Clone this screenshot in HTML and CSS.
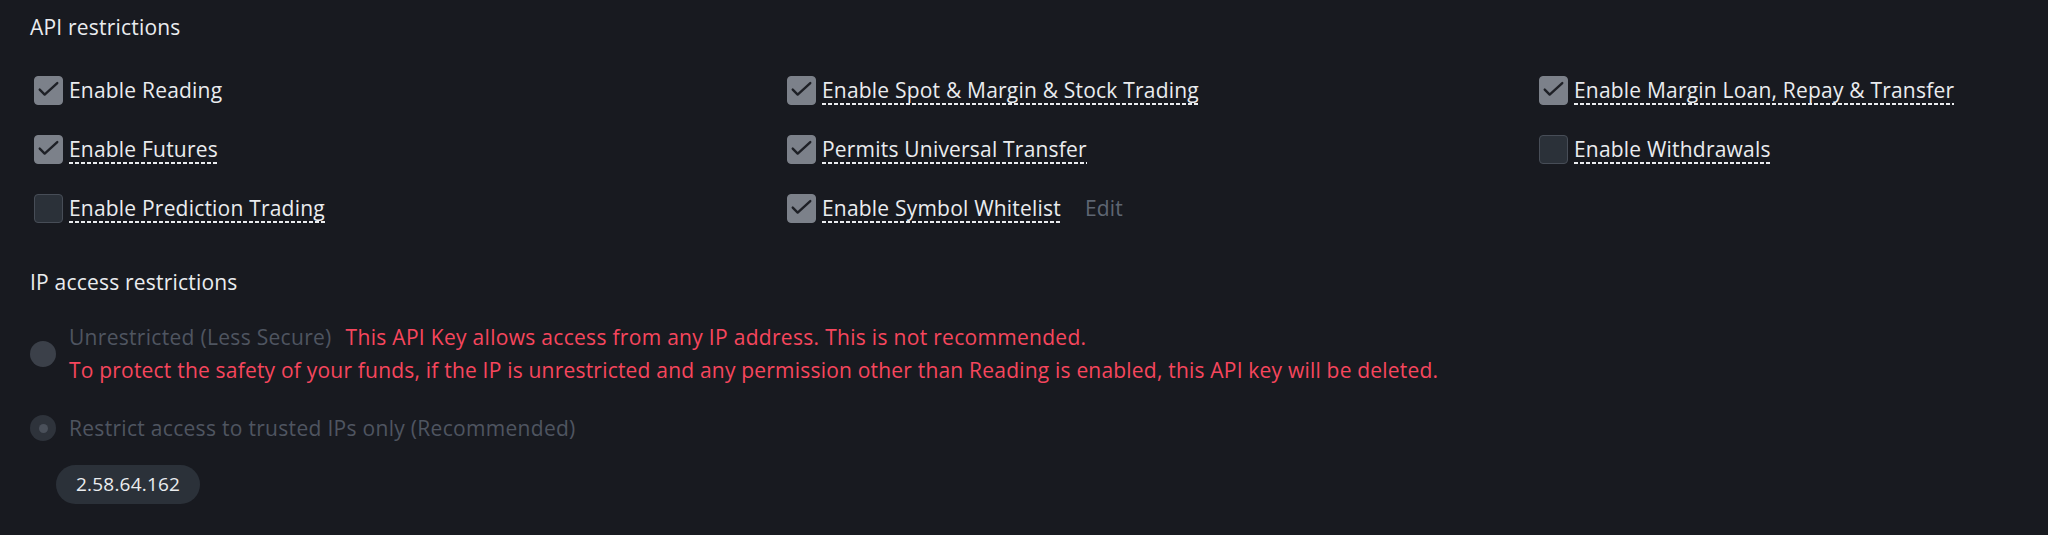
FILE: index.html
```html
<!DOCTYPE html>
<html lang="en">
<head>
<meta charset="utf-8">
<title>API restrictions</title>
<link rel="stylesheet" href="styles.css">
</head>
<body>
<div class="page">
  <h2 class="section-title">API restrictions</h2>
  <div class="perm-grid">
    <div class="perm"><span class="box checked"><svg viewBox="0 0 24 24"><path d="M4.2 11.2 L8.6 15.6 L19.8 5.4"/></svg></span><span class="label">Enable Reading</span></div>
    <div class="perm"><span class="box checked"><svg viewBox="0 0 24 24"><path d="M4.2 11.2 L8.6 15.6 L19.8 5.4"/></svg></span><span class="label dashed">Enable Spot &amp; Margin &amp; Stock Trading</span></div>
    <div class="perm"><span class="box checked"><svg viewBox="0 0 24 24"><path d="M4.2 11.2 L8.6 15.6 L19.8 5.4"/></svg></span><span class="label dashed">Enable Margin Loan, Repay &amp; Transfer</span></div>

    <div class="perm"><span class="box checked"><svg viewBox="0 0 24 24"><path d="M4.2 11.2 L8.6 15.6 L19.8 5.4"/></svg></span><span class="label dashed">Enable Futures</span></div>
    <div class="perm"><span class="box checked"><svg viewBox="0 0 24 24"><path d="M4.2 11.2 L8.6 15.6 L19.8 5.4"/></svg></span><span class="label dashed">Permits Universal Transfer</span></div>
    <div class="perm"><span class="box"></span><span class="label dashed">Enable Withdrawals</span></div>

    <div class="perm"><span class="box"></span><span class="label dashed">Enable Prediction Trading</span></div>
    <div class="perm"><span class="box checked"><svg viewBox="0 0 24 24"><path d="M4.2 11.2 L8.6 15.6 L19.8 5.4"/></svg></span><span class="label dashed">Enable Symbol Whitelist</span><span class="edit">Edit</span></div>
  </div>

  <h2 class="section-title ip-title">IP access restrictions</h2>
  <div class="radio-row first">
    <span class="radio"></span>
    <div class="radio-text">
      <div><span class="muted">Unrestricted (Less Secure)</span><span class="warn inline">This API Key allows access from any IP address. This is not recommended.</span></div>
      <div class="warn">To protect the safety of your funds, if the IP is unrestricted and any permission other than Reading is enabled, this API key will be deleted.</div>
    </div>
  </div>
  <div class="radio-row second">
    <span class="radio selected"><span class="dot"></span></span>
    <div class="radio-text"><span class="muted">Restrict access to trusted IPs only (Recommended)</span></div>
  </div>
  <div class="ip-list">
    <span class="ip-pill">2.58.64.162</span>
  </div>
</div>
</body>
</html>
```

FILE: styles.css
```css
html, body {
  margin: 0;
  padding: 0;
  background: #181a20;
}
body {
  font-family: "Open Sans", "Liberation Sans", sans-serif;
  color: #eaecef;
  letter-spacing: 0.2px;
  width: 2048px;
  height: 535px;
  overflow: hidden;
}
.page {
  padding: 13px 0 0 30px;
}
.section-title {
  margin: 0;
  font-size: 21px;
  line-height: 28px;
  font-weight: 400;
  color: #eaecef;
}
.perm-grid {
  margin-top: 35px;
  display: grid;
  grid-template-columns: 753px 752px 1fr;
  row-gap: 30px;
}
.perm {
  display: flex;
  align-items: flex-start;
  padding-left: 4px;
  height: 29px;
}
.box {
  width: 29px;
  height: 29px;
  box-sizing: border-box;
  border-radius: 4px;
  background: #2b3139;
  border: 1px solid #474d57;
  flex: none;
  display: flex;
  align-items: center;
  justify-content: center;
}
.box.checked {
  background: #7c818a;
  border-color: #7c818a;
}
.box svg {
  width: 27px;
  height: 27px;
}
.box svg path {
  fill: none;
  stroke: #1e2026;
  stroke-width: 2.1;
  stroke-linecap: round;
  stroke-linejoin: round;
}
.label {
  margin-left: 6px;
  font-size: 21px;
  line-height: 29px;
  height: 29px;
  white-space: nowrap;
}
.label.dashed {
  background-image: linear-gradient(to right, #eaecef 4px, transparent 4px);
  background-size: 6px 2px;
  background-repeat: repeat-x;
  background-position: 0 100%;
}
.edit {
  margin-left: 24px;
  font-size: 21px;
  line-height: 29px;
  color: #5e6673;
}
.ip-title {
  margin-top: 45px;
}
.radio-row {
  display: flex;
  align-items: center;
  font-size: 21px;
  line-height: 32.5px;
}
.radio-row.first {
  margin-top: 25px;
}
.radio-row.second {
  margin-top: 26px;
}
.radio {
  width: 26px;
  height: 26px;
  border-radius: 50%;
  background: #3b4049;
  flex: none;
  margin-right: 13px;
  display: flex;
  align-items: center;
  justify-content: center;
}
.radio.selected {
  background: #2e333b;
}
.radio .dot {
  width: 9px;
  height: 9px;
  border-radius: 50%;
  background: #4a505a;
}
.muted {
  color: #4f5560;
  letter-spacing: 0.3px;
}
.warn {
  color: #f6465d;
}
.warn.inline {
  margin-left: 14px;
  letter-spacing: 0.3px;
}
.ip-list {
  margin-top: 20px;
  padding-left: 26px;
  display: flex;
}
.ip-pill {
  display: inline-flex;
  align-items: center;
  height: 39px;
  padding: 0 20px;
  border-radius: 20px;
  background: #2b3139;
  color: #eaecef;
  font-size: 19px;
}
```
